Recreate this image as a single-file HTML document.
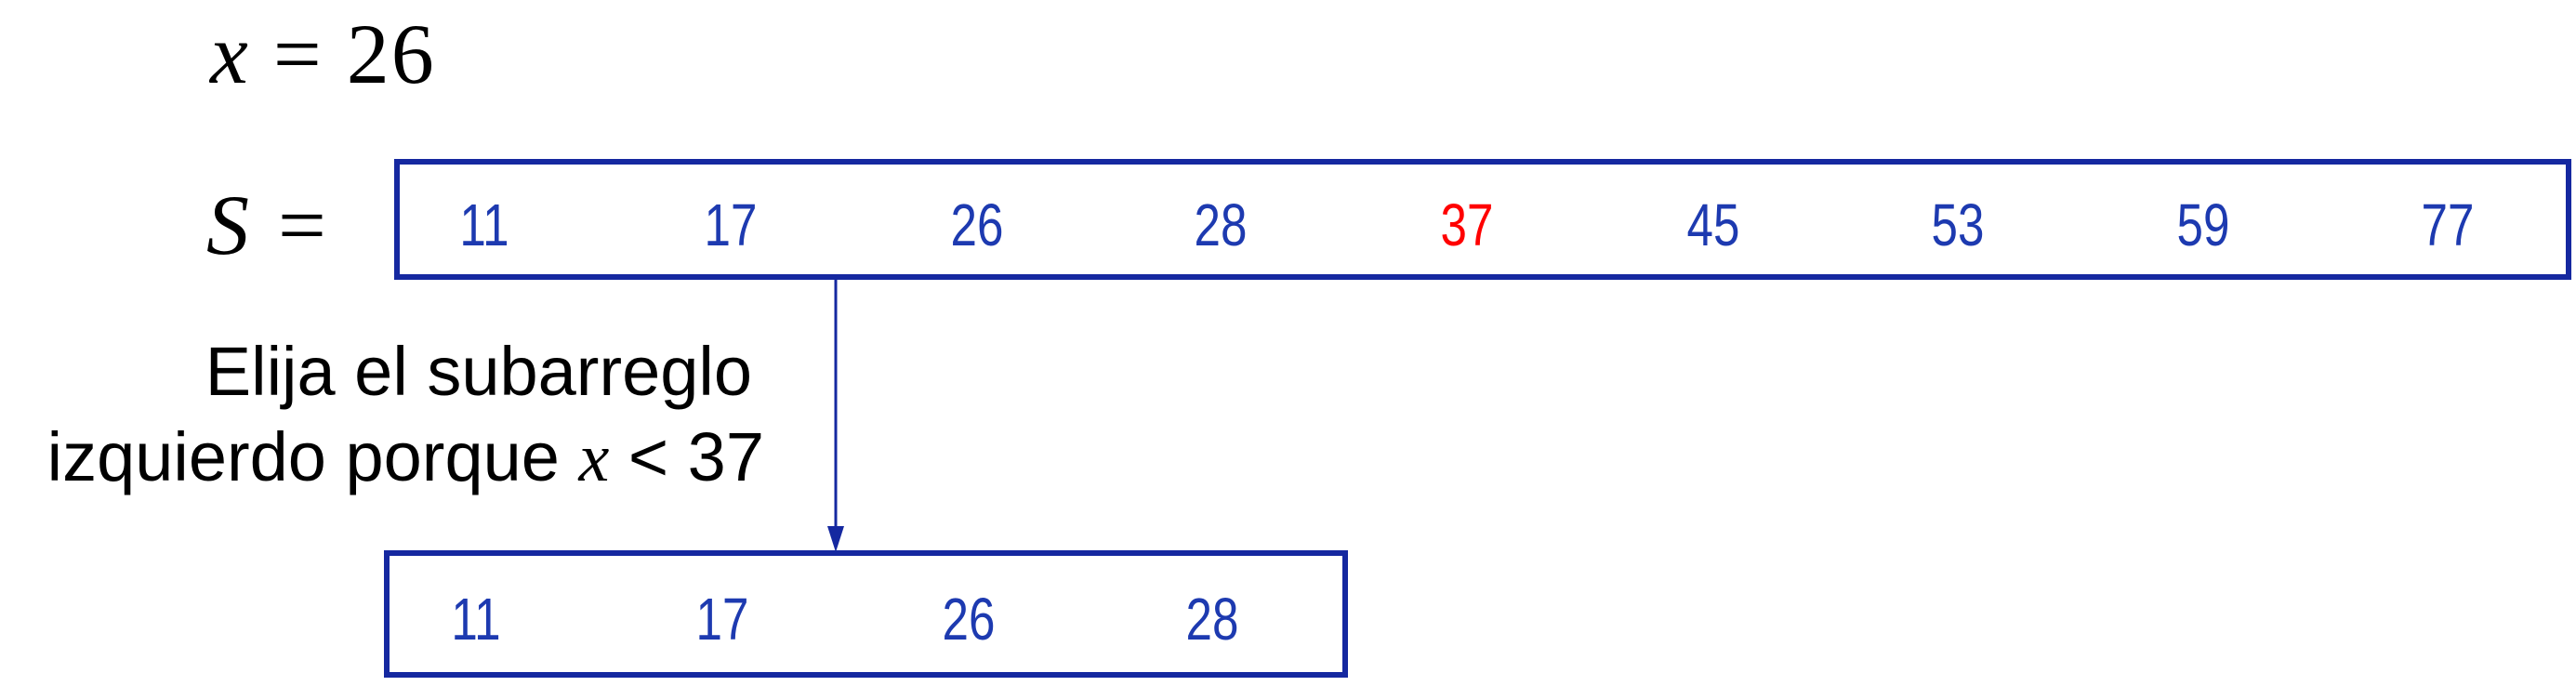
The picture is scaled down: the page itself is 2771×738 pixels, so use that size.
<!DOCTYPE html>
<html><head><meta charset="utf-8"><style>
html,body{margin:0;padding:0;background:#fff;}
body{width:2771px;height:738px;position:relative;overflow:hidden;}
.a{position:absolute;}
.box{position:absolute;border:6px solid #1528A0;box-sizing:border-box;}
.n{position:absolute;font-family:"Liberation Sans",sans-serif;font-size:64px;color:#1D3AB0;line-height:1;transform:translate(-50%,-50%) scaleX(0.8);}
.m{font-family:"Liberation Serif",serif;font-size:92px;color:#000;line-height:1;}
.t{font-family:"Liberation Sans",sans-serif;font-size:74px;color:#000;line-height:1;text-align:right;white-space:nowrap;}
</style></head><body>
<div class="a m" style="left:226px;top:12px;letter-spacing:2px;"><i>x</i> = 26</div>
<div class="a m" style="left:222px;top:196px;letter-spacing:4px;"><i>S</i> =</div>

<div class="box" style="left:424px;top:171px;width:2342px;height:130px;"></div>
<div class="n" style="left:521px;top:242px;">11</div>
<div class="n" style="left:786px;top:242px;">17</div>
<div class="n" style="left:1051px;top:242px;">26</div>
<div class="n" style="left:1313px;top:242px;">28</div>
<div class="n" style="left:1578px;top:242px;color:#ff0000;">37</div>
<div class="n" style="left:1843px;top:242px;">45</div>
<div class="n" style="left:2106px;top:242px;">53</div>
<div class="n" style="left:2370px;top:242px;">59</div>
<div class="n" style="left:2633px;top:242px;">77</div>

<svg class="a" style="left:0;top:0" width="2771" height="738">
<line x1="899" y1="300" x2="899" y2="570" stroke="#1528A0" stroke-width="3"/>
<polygon points="890,566 908,566 899,594" fill="#1528A0"/>
</svg>

<div class="a t" style="right:1962px;top:363px;">Elija el subarreglo</div>
<div class="a t" style="right:1949px;top:455px;">izquierdo porque <span style="font-family:'Liberation Serif',serif;font-style:italic;">x</span> &lt; 37</div>

<div class="box" style="left:413px;top:592px;width:1037px;height:137px;"></div>
<div class="n" style="left:512px;top:666px;">11</div>
<div class="n" style="left:777px;top:666px;">17</div>
<div class="n" style="left:1042px;top:666px;">26</div>
<div class="n" style="left:1304px;top:666px;">28</div>
</body></html>
